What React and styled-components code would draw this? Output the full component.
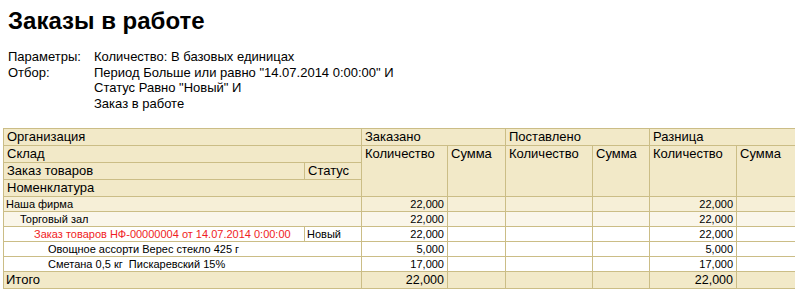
import React from 'react';
import styled, { createGlobalStyle } from 'styled-components';

const GlobalStyle = createGlobalStyle`
  html, body {
    margin: 0;
    padding: 0;
    background: #fff;
    overflow: hidden;
  }
  body {
    font-family: "Liberation Sans", Arial, sans-serif;
    color: #000;
  }
`;

const LINE = '#cbbd86';
const HEAD_BG = '#f2e9c8';

const Page = styled.div`
  width: 800px;
`;

const Heading = styled.div`
  padding: 8px 8px 0;
`;

const Title = styled.h1`
  margin: 0;
  font-size: 24px;
  line-height: 25px;
  font-weight: bold;
`;

const Params = styled.div`
  margin-top: 16px;
  display: grid;
  grid-template-columns: 86px 1fr;
  font-size: 13px;
  line-height: 15.7px;
`;

const TableWrap = styled.div`
  padding: 16px 0 0 3px;
`;

const Table = styled.table`
  width: 797px;
  table-layout: fixed;
  border-collapse: collapse;
  font-family: "Liberation Sans", Arial, sans-serif;
`;

const HeadCell = styled.td`
  background: ${HEAD_BG};
  border: 1px solid ${LINE};
  font-size: 13px;
  line-height: 16px;
  padding: 0 3px;
  vertical-align: top;
  white-space: nowrap;
  overflow: hidden;
`;

const rowBg = {
  group1: '#f6efd7',
  group2: '#faf6ea',
  plain: '#ffffff',
  total: HEAD_BG,
};

const Row = styled.tr`
  background: ${(p) => rowBg[p.$kind || 'plain']};
`;

const Cell = styled.td`
  border: 1px solid ${LINE};
  font-size: ${(p) => (p.$big ? '13px' : '11px')};
  line-height: ${(p) => (p.$big ? '16px' : '14px')};
  padding: 0 3px 0 ${(p) => 2 + (p.$level || 0) * 14}px;
  text-align: ${(p) => (p.$num ? 'right' : 'left')};
  color: ${(p) => (p.$red ? '#f01c24' : '#000')};
  white-space: pre;
  overflow: hidden;
`;

const NumCell = styled(Cell)`
  font-size: ${(p) => (p.$big ? '12.5px' : '11px')};
`;

const rows = [
  { kind: 'group1', name: 'Наша фирма', level: 0, qty: '22,000' },
  { kind: 'group2', name: 'Торговый зал', level: 1, qty: '22,000' },
  { kind: 'plain', name: 'Заказ товаров НФ-00000004 от 14.07.2014 0:00:00', level: 2, qty: '22,000', status: 'Новый', red: true },
  { kind: 'plain', name: 'Овощное ассорти Верес стекло 425 г', level: 3, qty: '5,000' },
  { kind: 'plain', name: 'Сметана 0,5 кг  Пискаревский 15%', level: 3, qty: '17,000' },
];

export default function App() {
  return (
    <Page>
      <GlobalStyle />
      <Heading>
        <Title>Заказы в работе</Title>
        <Params>
          <span>Параметры:</span>
          <span>Количество: В базовых единицах</span>
          <span>Отбор:</span>
          <span>
            Период Больше или равно "14.07.2014 0:00:00" И<br />
            Статус Равно "Новый" И<br />
            Заказ в работе
          </span>
        </Params>
      </Heading>

      <TableWrap>
        <Table>
          <colgroup>
            <col style={{ width: 301 }} />
            <col style={{ width: 57 }} />
            <col style={{ width: 86 }} />
            <col style={{ width: 58 }} />
            <col style={{ width: 87 }} />
            <col style={{ width: 57 }} />
            <col style={{ width: 87 }} />
            <col style={{ width: 64 }} />
          </colgroup>
          <thead>
            <tr>
              <HeadCell colSpan={2}>Организация</HeadCell>
              <HeadCell colSpan={2}>Заказано</HeadCell>
              <HeadCell colSpan={2}>Поставлено</HeadCell>
              <HeadCell colSpan={2}>Разница</HeadCell>
            </tr>
            <tr>
              <HeadCell colSpan={2}>Склад</HeadCell>
              <HeadCell rowSpan={3}>Количество</HeadCell>
              <HeadCell rowSpan={3}>Сумма</HeadCell>
              <HeadCell rowSpan={3}>Количество</HeadCell>
              <HeadCell rowSpan={3}>Сумма</HeadCell>
              <HeadCell rowSpan={3}>Количество</HeadCell>
              <HeadCell rowSpan={3}>Сумма</HeadCell>
            </tr>
            <tr>
              <HeadCell>Заказ товаров</HeadCell>
              <HeadCell>Статус</HeadCell>
            </tr>
            <tr>
              <HeadCell colSpan={2}>Номенклатура</HeadCell>
            </tr>
          </thead>
          <tbody>
            {rows.map((r) => (
              <Row key={r.name} $kind={r.kind}>
                {r.status ? (
                  <>
                    <Cell $level={r.level} $red={r.red}>{r.name}</Cell>
                    <Cell>{r.status}</Cell>
                  </>
                ) : (
                  <Cell colSpan={2} $level={r.level}>{r.name}</Cell>
                )}
                <NumCell $num>{r.qty}</NumCell>
                <Cell />
                <Cell />
                <Cell />
                <NumCell $num>{r.qty}</NumCell>
                <Cell />
              </Row>
            ))}
            <Row $kind="total">
              <Cell colSpan={2} $big>Итого</Cell>
              <NumCell $num $big>22,000</NumCell>
              <Cell $big />
              <Cell $big />
              <Cell $big />
              <NumCell $num $big>22,000</NumCell>
              <Cell $big />
            </Row>
          </tbody>
        </Table>
      </TableWrap>
    </Page>
  );
}
